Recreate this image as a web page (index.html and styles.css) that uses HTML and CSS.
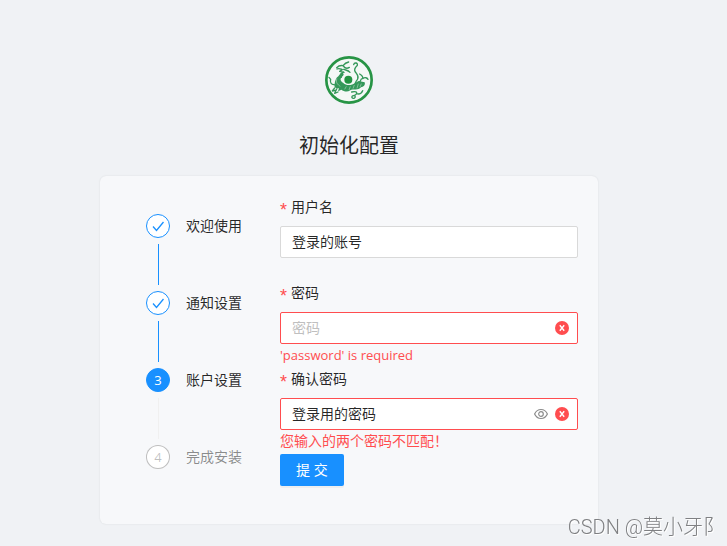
FILE: index.html
```html
<!DOCTYPE html>
<html lang="zh-CN">
  <head>
    <title>初始化配置</title>
    <meta charset="utf-8" />
    <meta name="viewport" content="width=device-width, initial-scale=1">
    <link rel="stylesheet" href="styles.css">
  </head>
  <body>
    <main class="page">
      <svg class="logo" viewBox="0 0 144 144" aria-hidden="true">
        <circle cx="72" cy="72" r="68" fill="#f4f8f6" stroke="#279445" stroke-width="8"/>
        <g fill="none" stroke="#35985a" stroke-width="4" stroke-linecap="round" stroke-linejoin="round">
          <path d="M71 18C62 20 58 24 54 29C46 27 40 30 35 35M36 39C44 35 48 40 52 41L44 46L57 49"/>
          <path d="M55 30C60 37 67 38 73 34M56 40C64 43 70 43 75 49"/>
          <path d="M86 26C88 18 99 20 97 28C92 33 86 38 90 46C94 54 103 59 98 69C94 77 87 80 91 88"/>
          <path d="M104 54C111 58 115 61 113 68C120 63 126 65 129 70M113 68C106 67 108 75 104 78"/>
          <path d="M28 86C19 87 14 79 17 70L12 64M29 96L22 105L31 103M35 99L29 112L39 108"/>
          <path d="M55 48C48 52 46 58 49 64M80 108C91 105 98 108 94 114C90 121 78 117 81 125C85 131 95 123 89 120M94 113C104 116 110 111 113 104"/>
        </g>
        <path fill="#35985a" d="M48 50C57 50 59 55 51 62C44 69 46 74 55 81C65 91 82 87 91 80L101 75L119 79C122 88 115 93 108 94C100 105 84 98 76 103C65 110 56 105 49 101L39 106L42 97C31 99 26 91 29 83C30 75 33 65 40 61Z"/>
        <path fill="none" stroke="#a9d3b8" stroke-width="2" d="M36 68C30 78 39 87 46 91M59 100L64 91M72 102L76 91M84 98L88 87M96 97L100 83M105 93L109 83"/>
        <circle cx="70" cy="71" r="12" fill="#239342"/>
      </svg>
      <h1 class="title">初始化配置</h1>

      <section class="card">
        <ol class="steps">
          <li class="step step-finish">
            <span class="step-icon">
              <svg viewBox="0 0 14 14" width="14" height="14" aria-hidden="true"><path d="M2 7.5L5.5 11.5L12.5 3"/></svg>
            </span>
            <span class="step-title">欢迎使用</span>
          </li>
          <li class="step step-finish">
            <span class="step-icon">
              <svg viewBox="0 0 14 14" width="14" height="14" aria-hidden="true"><path d="M2 7.5L5.5 11.5L12.5 3"/></svg>
            </span>
            <span class="step-title">通知设置</span>
          </li>
          <li class="step step-process" aria-current="step">
            <span class="step-icon">3</span>
            <span class="step-title">账户设置</span>
          </li>
          <li class="step step-wait">
            <span class="step-icon">4</span>
            <span class="step-title">完成安装</span>
          </li>
        </ol>

        <form class="form" novalidate>
          <div class="form-item">
            <label for="username"><span class="required">*</span>用户名</label>
            <div class="field">
              <input type="text" id="username" name="username" value="登录的账号" />
            </div>
            <p class="explain"></p>
          </div>
          <div class="form-item">
            <label for="password"><span class="required">*</span>密码</label>
            <div class="field field-error">
              <input type="password" id="password" name="password" placeholder="密码" />
              <svg class="error-icon" viewBox="0 0 14 14" aria-hidden="true"><circle cx="7" cy="7" r="7"/><path d="M4.8 4.2L9.2 9.8M9.2 4.2L4.8 9.8"/></svg>
            </div>
            <p class="explain explain-latin">'password' is required</p>
          </div>
          <div class="form-item">
            <label for="confirm"><span class="required">*</span>确认密码</label>
            <div class="field field-error">
              <input type="text" id="confirm" name="confirm" value="登录用的密码" />
              <button type="button" class="toggle" aria-label="隐藏密码">
                <svg viewBox="0 0 14 14" width="14" height="14" aria-hidden="true"><path d="M0.6 7C3.4 1 10.6 1 13.4 7C10.6 13 3.4 13 0.6 7Z"/><circle cx="7" cy="7" r="2.3"/></svg>
              </button>
              <svg class="error-icon" viewBox="0 0 14 14" aria-hidden="true"><circle cx="7" cy="7" r="7"/><path d="M4.8 4.2L9.2 9.8M9.2 4.2L4.8 9.8"/></svg>
            </div>
            <p class="explain">您输入的两个密码不匹配！</p>
          </div>
          <button type="submit" class="submit">提 交</button>
        </form>
      </section>
    </main>
    <div class="watermark">CSDN @莫小牙阝</div>
  </body>
</html>
```

FILE: styles.css
```css
* {
  box-sizing: border-box;
}

body {
  margin: 0;
  min-height: 100vh;
  background-color: #f0f2f5;
  color: rgba(0, 0, 0, 0.85);
  font-family: "Open Sans", "Noto Sans CJK SC", sans-serif;
  font-size: 14px;
  line-height: 22px;
}

.page {
  display: flex;
  flex-direction: column;
  align-items: center;
  padding: 56px 29px 20px 0;
}

.logo {
  width: 48px;
  height: 48px;
}

.title {
  margin: 26px 0 14px;
  font-size: 20px;
  font-weight: 400;
  line-height: 32px;
}

.card {
  display: flex;
  width: 100%;
  max-width: 498px;
  padding: 20px 20px 38px 46px;
  background-color: #f7f8fa;
  border-radius: 6px;
  box-shadow: 0 0 2px rgba(0, 0, 0, 0.1);
}

.steps {
  flex: none;
  width: 134px;
  margin: 0;
  padding: 18px 0 0;
  list-style: none;
}

.step {
  display: grid;
  grid-template-columns: 24px auto;
  grid-template-rows: 24px 41px;
  row-gap: 6px;
  column-gap: 16px;
  padding-bottom: 6px;
}

.step::after {
  content: "";
  width: 1px;
  margin-left: 12px;
  background-color: #f0f0f0;
}

.step:last-child {
  grid-template-rows: 24px;
  padding-bottom: 0;
}

.step:last-child::after {
  display: none;
}

.step-icon {
  display: flex;
  align-items: center;
  justify-content: center;
  border: 1px solid #1890ff;
  border-radius: 50%;
  background-color: #fff;
  font-size: 13px;
  line-height: 24px;
}

.step-icon svg {
  fill: none;
  stroke: #1890ff;
  stroke-width: 1.3;
}

.step-title {
  line-height: 24px;
}

.step-finish::after {
  background-color: #1890ff;
}

.step-process .step-icon {
  background-color: #1890ff;
  color: #fff;
}

.step-wait .step-icon {
  border-color: rgba(0, 0, 0, 0.25);
  color: rgba(0, 0, 0, 0.25);
}

.step-wait .step-title {
  color: rgba(0, 0, 0, 0.45);
}

.form {
  flex: 1;
  min-width: 0;
}

.form-item label {
  display: flex;
  height: 22px;
  margin-bottom: 8px;
}

.required {
  width: 7px;
  margin-right: 4px;
  color: #ff4d4f;
  font-family: "Liberation Sans", sans-serif;
  font-size: 18px;
  line-height: 28px;
}

.field {
  display: flex;
  align-items: center;
  height: 32px;
  padding: 0 8px 0 11px;
  border: 1px solid #d9d9d9;
  border-radius: 2px;
  background-color: #fff;
}

.field-error {
  border-color: #ff4d4f;
}

.field input {
  flex: 1;
  min-width: 0;
  padding: 0;
  border: 0;
  outline: none;
  background: none;
  color: inherit;
  font: inherit;
}

.field input::placeholder {
  color: #bfbfbf;
}

.error-icon {
  width: 14px;
  height: 14px;
}

.error-icon circle {
  fill: #ff4d4f;
}

.error-icon path {
  fill: none;
  stroke: #fff;
  stroke-width: 1.4;
}

.toggle {
  display: flex;
  margin-right: 7px;
  padding: 0;
  border: 0;
  background: none;
  cursor: pointer;
}

.toggle svg {
  fill: none;
  stroke: #8c8c8c;
  stroke-width: 1.2;
}

.explain {
  height: 24px;
  margin: 0;
  color: #ff4d4f;
}

.explain-latin {
  font-size: 13px;
}

.submit {
  display: block;
  height: 32px;
  padding: 0 16px;
  border: 0;
  border-radius: 2px;
  background-color: #1890ff;
  box-shadow: 0 2px 0 rgba(0, 0, 0, 0.04);
  color: #fff;
  font: inherit;
  cursor: pointer;
}

.watermark {
  position: fixed;
  right: 4px;
  bottom: 5px;
  color: #7f8083;
  font-family: Roboto, "Noto Sans CJK SC", sans-serif;
  font-size: 20px;
  font-weight: 300;
  line-height: 28px;
  text-shadow: 1px 1px 0 #fff;
}
```
